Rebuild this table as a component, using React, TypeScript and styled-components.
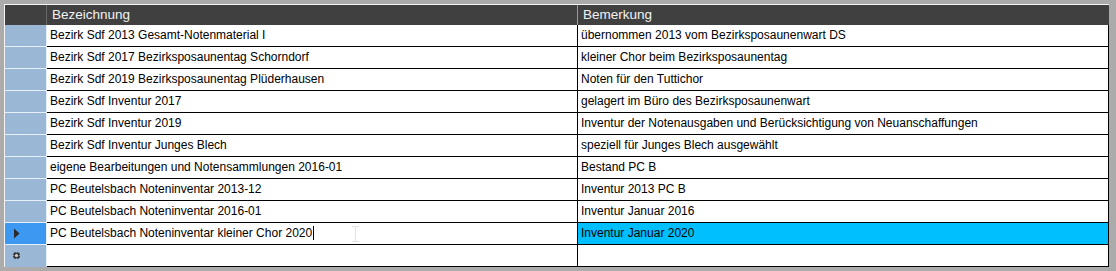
import React from 'react';
import styled, { createGlobalStyle } from 'styled-components';

const GlobalStyle = createGlobalStyle`
  html, body {
    margin: 0;
    padding: 0;
    background: #ababab;
  }
`;

type Row = { name: string; note: string };

const rows: Row[] = [
  { name: 'Bezirk Sdf 2013 Gesamt-Notenmaterial I', note: 'übernommen 2013 vom Bezirksposaunenwart DS' },
  { name: 'Bezirk Sdf 2017 Bezirksposaunentag Schorndorf', note: 'kleiner Chor beim Bezirksposaunentag' },
  { name: 'Bezirk Sdf 2019 Bezirksposaunentag Plüderhausen', note: 'Noten für den Tuttichor' },
  { name: 'Bezirk Sdf Inventur 2017', note: 'gelagert im Büro des Bezirksposaunenwart' },
  { name: 'Bezirk Sdf Inventur 2019', note: 'Inventur der Notenausgaben und Berücksichtigung von Neuanschaffungen' },
  { name: 'Bezirk Sdf Inventur Junges Blech', note: 'speziell für Junges Blech ausgewählt' },
  { name: 'eigene Bearbeitungen und Notensammlungen 2016-01', note: 'Bestand PC B' },
  { name: 'PC Beutelsbach Noteninventar 2013-12', note: 'Inventur 2013 PC B' },
  { name: 'PC Beutelsbach Noteninventar 2016-01', note: 'Inventur Januar 2016' },
  { name: 'PC Beutelsbach Noteninventar kleiner Chor 2020', note: 'Inventur Januar 2020' },
];

const SELECTED = 9;

export default function App() {
  return (
    <>
      <GlobalStyle />
      <Frame>
        <Grid>
          <HeaderCorner />
          <HeaderCell>Bezeichnung</HeaderCell>
          <HeaderCell last>Bemerkung</HeaderCell>

          {rows.map((r, i) => {
            const selected = i === SELECTED;
            return (
              <React.Fragment key={i}>
                <RowHead selected={selected}>
                  {selected && (
                    <svg width="7" height="11" viewBox="0 0 7 11">
                      <path d="M1 0.5 L6.5 5.5 L1 10.5 Z" fill="#2a2a2a" />
                    </svg>
                  )}
                </RowHead>
                <Cell>
                  {r.name}
                  {selected && <Caret />}
                  {selected && (
                    <IBeam width="9" height="16" viewBox="0 0 9 16">
                      <path d="M1 0.5 H8 M4.5 0.5 V15.5 M1 15.5 H8" stroke="#e4e4e4" strokeWidth="1" fill="none" />
                    </IBeam>
                  )}
                </Cell>
                <Cell last highlight={selected}>{r.note}</Cell>
              </React.Fragment>
            );
          })}

          <RowHead newRow>
            <svg width="9" height="9" viewBox="0 0 9 9">
              <circle cx="4.5" cy="4.5" r="3.6" fill="#3a3a3a" />
              <circle cx="4.5" cy="4.5" r="1.6" fill="#cfcfcf" />
              <path d="M4.5 0 V2 M4.5 7 V9 M0 4.5 H2 M7 4.5 H9" stroke="#9bb7d6" strokeWidth="0.8" />
            </svg>
          </RowHead>
          <Cell />
          <Cell last />
        </Grid>
      </Frame>
    </>
  );
}

const Frame = styled.div`
  width: 1116px;
  height: 271px;
  box-sizing: border-box;
  padding: 4px 7px 0 4px;
  overflow: hidden;
`;

const Grid = styled.div`
  display: grid;
  grid-template-columns: 42px 531px 531px;
  grid-auto-rows: 22px;
  grid-template-rows: 20px;
  border-top: 1px solid #f4f4f4;
  border-left: 1px solid #f4f4f4;
  font-family: 'Liberation Sans', Arial, sans-serif;
`;

const HeaderCorner = styled.div`
  background: #404040;
  border-right: 1px solid #6a6a6a;
`;

const HeaderCell = styled.div<{ last?: boolean }>`
  background: #404040;
  color: #f2f2f2;
  font-size: 13.5px;
  line-height: 20px;
  padding-left: 5px;
  border-right: 1px solid ${(p) => (p.last ? '#404040' : '#9a9a9a')};
  white-space: nowrap;
`;

const RowHead = styled.div<{ selected?: boolean; newRow?: boolean }>`
  background: ${(p) => (p.selected ? '#3d98f2' : '#9bb7d6')};
  border-bottom: 1px solid ${(p) => (p.newRow ? '#9bb7d6' : '#e6eef7')};
  border-right: 1px solid #e6eef7;
  display: flex;
  align-items: center;
  padding-left: ${(p) => (p.newRow ? '7px' : '8px')};
  box-sizing: border-box;
`;

const Cell = styled.div<{ last?: boolean; highlight?: boolean }>`
  position: relative;
  background: ${(p) => (p.highlight ? '#00bfff' : '#ffffff')};
  color: #000;
  font-size: 12px;
  line-height: 21px;
  padding-left: 3px;
  border-bottom: 1px solid #000;
  border-right: 1px solid #000;
  box-sizing: border-box;
  white-space: nowrap;
  overflow: hidden;
`;

const Caret = styled.span`
  display: inline-block;
  width: 1px;
  height: 14px;
  background: #000;
  vertical-align: -3px;
  margin-left: 1px;
`;

const IBeam = styled.svg`
  position: absolute;
  left: 304px;
  top: 3px;
`;
